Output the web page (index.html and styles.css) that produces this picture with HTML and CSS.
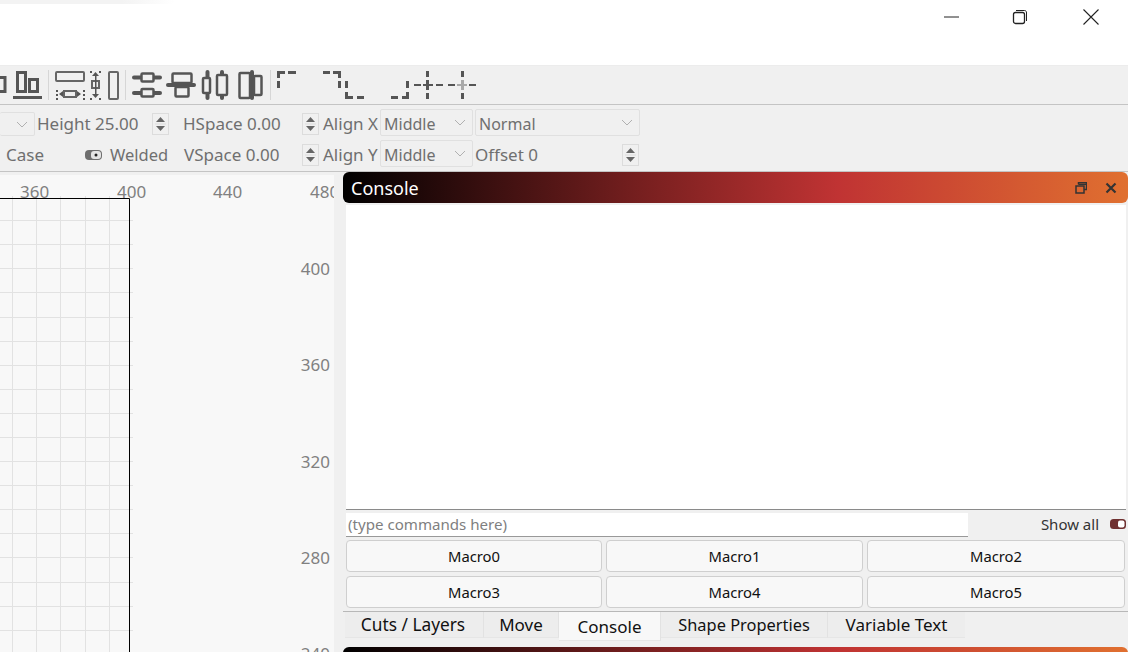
FILE: index.html
```html
<!DOCTYPE html>
<html lang="en">
<head>
<meta charset="utf-8">
<title>LightBurn</title>
<link rel="stylesheet" href="styles.css">
</head>
<body>
<svg class="defs" width="0" height="0" aria-hidden="true">
  <symbol id="spin" viewBox="0 0 17 22">
    <rect x="0.5" y="0.5" width="16" height="21" fill="none" stroke="#dcdcdc"/>
    <path d="M8.500 4L13 9H4Z" fill="#666"/>
    <path d="M8.500 18L13 13H4Z" fill="#666"/>
    <path d="M3 11H14" stroke="#dcdcdc"/>
  </symbol>
  <symbol id="chev" viewBox="0 0 12 7">
    <path d="M1 1L6 6L11 1" fill="none" stroke="#b0b0b0"/>
  </symbol>
</svg>
<div class="app">
  <header class="titlebar">
    <div class="shadow"></div>
    <svg class="winicon win-min" width="16" height="16" viewBox="0 0 16 16"><path d="M0 8H15" stroke="#222" fill="none"/></svg>
    <svg class="winicon win-max" width="16" height="16" viewBox="0 0 16 16"><rect x="1.500" y="3.500" width="11" height="11" rx="2" fill="none" stroke="#222" stroke-width="1.300"/><path d="M4 1.500H12.500C14 1.500 14.500 2.500 14.500 4V12" fill="none" stroke="#222"/></svg>
    <svg class="winicon win-close" width="16" height="16" viewBox="0 0 16 16"><path d="M0.500 0.500L15.500 15.500M15.500 0.500L0.500 15.500" stroke="#222" fill="none" stroke-width="1.100"/></svg>
  </header>

  <div class="toolbar">
    <svg class="tool t1" width="48" height="39" viewBox="0 0 48 39">
      <g fill="none" stroke="#555" stroke-width="3">
        <rect x="-4" y="11.500" width="9" height="14"/>
        <rect x="17.500" y="6.500" width="8" height="19"/>
        <rect x="29.500" y="13.500" width="8" height="12"/>
      </g>
      <rect x="13" y="30" width="29" height="3" fill="#555"/>
    </svg>
    <i class="sep"></i>
    <svg class="tool t2" width="76" height="39" viewBox="49 0 76 39">
      <g fill="none" stroke="#666" stroke-width="2">
        <rect x="56" y="6" width="28" height="9" rx="1"/>
        <rect x="64" y="25" width="12" height="6"/>
        <rect x="92" y="15" width="7" height="7"/>
        <rect x="109" y="6" width="9" height="27" rx="1"/>
      </g>
      <g fill="#555">
        <path d="M59 28L63 25V31ZM81 28L77 25V31ZM95.500 6L99 10H92ZM95.500 32L99 28H92Z"/>
        <rect x="95" y="9" width="1.500" height="20"/>
        <rect x="56" y="24" width="2" height="2"/><rect x="56" y="28" width="2" height="2"/><rect x="56" y="32" width="2" height="2"/>
        <rect x="83" y="24" width="2" height="2"/><rect x="83" y="28" width="2" height="2"/><rect x="83" y="32" width="2" height="2"/>
        <rect x="90" y="5" width="2" height="2"/><rect x="99" y="5" width="2" height="2"/>
        <rect x="90" y="32" width="2" height="2"/><rect x="99" y="32" width="2" height="2"/>
      </g>
    </svg>
    <i class="sep"></i>
    <svg class="tool t3" width="144" height="39" viewBox="126 0 144 39">
      <g fill="#555">
        <rect x="132" y="9.500" width="30" height="4" rx="2"/>
        <rect x="132" y="25" width="30" height="4" rx="2"/>
        <rect x="166" y="17" width="30" height="4" rx="2"/>
        <rect x="205.500" y="4" width="4" height="30" rx="2"/>
        <rect x="220" y="4" width="4" height="30" rx="2"/>
        <rect x="250" y="4" width="4" height="30" rx="2"/>
      </g>
      <g fill="#f0f0f0" stroke="#555" stroke-width="2.500">
        <rect x="141.500" y="7.500" width="12" height="8" rx="1"/>
        <rect x="141.500" y="23" width="12" height="7.500" rx="1"/>
        <rect x="172.500" y="7.500" width="19" height="9.500" rx="1"/>
        <rect x="175.500" y="21" width="13" height="9.500" rx="1"/>
        <rect x="203" y="12" width="7" height="15" rx="1"/>
        <rect x="217" y="9" width="10" height="20" rx="1"/>
        <rect x="239.500" y="7" width="10.500" height="25" rx="1"/>
        <rect x="254" y="10" width="7.500" height="19" rx="1"/>
      </g>
    </svg>
    <i class="sep"></i>
    <svg class="tool t4" width="210" height="39" viewBox="271 0 210 39">
      <g fill="#555">
        <path d="M277 5H285V8H280V12H277ZM288 5H296V8H288ZM277 15H280V22H277Z"/>
        <path d="M323 5H330V8H323ZM333 5H341V12H338V8H333ZM338 15H341V22H338Z"/>
        <path d="M345 15H348V22H345ZM345 26H348V30H353V33H345ZM357 30H364V33H357Z"/>
        <path d="M406 15H409V22H406ZM406 26H409V33H402V30H406ZM391 30H398V33H391Z"/>
        <path d="M426 5H429V11H426ZM426 27H429V33H426ZM414 18H421V20H414ZM436 18H443V20H436ZM426 14H429V18H433V20H429V24H426V20H423V18H426Z"/>
        <path d="M461 5H464V11H461ZM461 27H464V33H461ZM448 18H455V20H448ZM469 18H476V20H469Z"/>
      </g>
      <path d="M461 14H464V18H467V20H464V24H461V20H457V18H461Z" fill="#a8a8a8"/>
    </svg>
  </div>

  <div class="props">
    <div class="combo combo-clipped"><svg class="chev" width="12" height="7"><use href="#chev"/></svg></div>
    <span class="lbl">Height 25.00</span>
    <svg class="spin" width="17" height="22"><use href="#spin"/></svg>
    <span class="lbl">HSpace 0.00</span>
    <svg class="spin" width="17" height="22"><use href="#spin"/></svg>
    <span class="lbl">Align X</span>
    <div class="combo"><span>Middle</span><svg class="chev" width="12" height="7"><use href="#chev"/></svg></div>
    <div class="combo combo-wide"><span>Normal</span><svg class="chev" width="12" height="7"><use href="#chev"/></svg></div>

    <span class="lbl lbl-case">Case</span>
    <div class="welded">
      <svg class="toggle" width="17" height="10" viewBox="0 0 17 10"><rect width="17" height="10" rx="4" fill="#6e6e6e"/><rect x="6" y="1" width="10" height="8" rx="3" fill="#e4e4e4"/><circle cx="11" cy="5" r="1.500" fill="#222"/></svg>
      <span class="lbl lbl-welded">Welded</span>
    </div>
    <span class="lbl lbl-v">VSpace 0.00</span>
    <svg class="spin" width="17" height="22"><use href="#spin"/></svg>
    <span class="lbl">Align Y</span>
    <div class="combo"><span>Middle</span><svg class="chev" width="12" height="7"><use href="#chev"/></svg></div>
    <div class="offset"><span class="lbl">Offset 0</span><svg class="spin" width="17" height="22"><use href="#spin"/></svg></div>
  </div>

  <main class="main">
    <section class="canvas">
      <svg class="grid" width="334" height="477" viewBox="0 175 334 477">
        <g stroke="#e2e2e2" fill="none">
          <path d="M12.500 196V652M36.500 196V652M60.500 196V652M85.500 196V652M109.500 196V652"/>
          <path d="M0 220.500H133M0 244.500H133M0 268.500H133M0 292.500H133M0 317.500H133M0 341.500H133M0 365.500H133M0 389.500H133M0 413.500H133M0 437.500H133M0 461.500H133M0 485.500H133M0 509.500H133M0 533.500H133M0 557.500H133M0 582.500H133M0 606.500H133M0 630.500H133"/>
        </g>
        <path d="M0 198.500H129.500V652" fill="none" stroke="#000"/>
      </svg>
      <span class="rx r360">360</span>
      <span class="rx r400">400</span>
      <span class="rx r440">440</span>
      <span class="rx r480">480</span>
      <span class="ry y400">400</span>
      <span class="ry y360">360</span>
      <span class="ry y320">320</span>
      <span class="ry y280">280</span>
      <span class="ry y240">240</span>
    </section>

    <aside class="dock">
      <div class="panelhead">
        <span class="paneltitle">Console</span>
        <svg width="12" height="12" viewBox="0 0 12 12"><path d="M3.500 2.500V0.500H11.500V7.500H9" fill="none" stroke="#333" stroke-width="1.500"/><path d="M3.500 1.500H11V3H3.500Z" fill="#333"/><rect x="1" y="4" width="8" height="7" fill="none" stroke="#333" stroke-width="1.500"/></svg>
        <svg class="panelclose" width="12" height="12" viewBox="0 0 12 12"><path d="M1.500 1.500L10.500 10.500M10.500 1.500L1.500 10.500" stroke="#333" stroke-width="2.200" fill="none"/></svg>
      </div>
      <div class="output"></div>
      <div class="cmdrow">
        <div class="cmd">(type commands here)</div>
        <span class="showall">Show all</span>
        <svg class="toggle2" width="16" height="10" viewBox="0 0 16 10"><rect width="16" height="10" rx="3.500" fill="#6f3030"/><rect x="8" y="1.500" width="6.500" height="7" rx="2" fill="#fff"/></svg>
      </div>
      <div class="macros">
        <button class="macro">Macro0</button>
        <button class="macro">Macro1</button>
        <button class="macro">Macro2</button>
        <button class="macro">Macro3</button>
        <button class="macro">Macro4</button>
        <button class="macro">Macro5</button>
      </div>
      <nav class="tabs">
        <span class="tab tab-cuts">Cuts / Layers</span>
        <span class="tab tab-move">Move</span>
        <span class="tab tab-active">Console</span>
        <span class="tab tab-shape">Shape Properties</span>
        <span class="tab tab-var">Variable Text</span>
      </nav>
      <div class="nexthead"></div>
    </aside>
  </main>
</div>
</body>
</html>
```
FILE: styles.css
```css
* { box-sizing: border-box; }
html, body { margin: 0; padding: 0; }
body { background: #f0f0f0; font-family: "Noto Sans", "Open Sans", sans-serif; font-size: 16px; overflow: hidden; }
.defs { position: absolute; }
.app { width: 1128px; height: 652px; display: flex; flex-direction: column; overflow: hidden; }

.titlebar { height: 66px; flex: none; background: #fff; display: flex; align-items: flex-start; position: relative; border-bottom: 1px solid #ececec; }
.shadow { position: absolute; left: 0; top: 0; width: 175px; height: 4px; background: linear-gradient(90deg, #f3f3f3 70%, #fff); }
.winicon { flex: none; margin-top: 9px; }
.win-min { margin-left: 944px; }
.win-max { margin-left: 52px; }
.win-close { margin-left: 55px; }

.toolbar { height: 39px; flex: none; display: flex; align-items: flex-start; background: #f0f0f0; border-bottom: 1px solid #c4c4c4; }
.tool { flex: none; display: block; }
.t1 { width: 48px; }
.sep { flex: none; width: 1px; height: 30px; margin-top: 4px; background: #d6d6d6; }

.props { height: 67px; flex: none; display: grid; grid-template-columns: 37px 115px 31px 119px 21px 57px 95px 165px; grid-template-rows: 28px 28px; row-gap: 3px; align-items: center; padding-top: 3px; border-bottom: 1px solid #c4c4c4; background: #f0f0f0; }
.lbl { color: #6f6f6f; white-space: nowrap; line-height: 22px; font-size: 17px; margin-top: 4px; }
.lbl-case { padding-left: 6px; }
.lbl-v { padding-left: 1px; }
.lbl-welded { font-size: 16.500px; }
.combo { width: 93px; height: 27px; border: 1px solid #e0e0e0; border-radius: 2px; display: flex; align-items: center; justify-content: space-between; padding: 0 6px 0 3px; color: #6f6f6f; }
.combo span { padding-top: 4px; }
.combo-clipped { width: 35px; border-left: 0; justify-content: flex-end; height: 24px; margin-top: 4px; }
.combo-wide { width: 165px; }
.chev { flex: none; display: block; }
.spin { display: block; margin-top: 4px; }
.welded { grid-column: span 2; display: flex; align-items: center; gap: 8px; padding-left: 48px; }
.toggle { flex: none; margin-top: 4px; }
.offset { display: flex; align-items: center; justify-content: space-between; width: 164px; }

.main { flex: 1; min-height: 0; display: flex; }
.canvas { width: 334px; flex: none; margin-top: 3px; background: #f8f8f8; position: relative; overflow: hidden; color: #808080; font-size: 17px; }
.grid { position: absolute; left: 0; top: 0; display: block; }
.rx, .ry { position: absolute; line-height: 22px; }
.rx { top: 6px; }
.r360 { left: 20px; }
.r400 { left: 117px; }
.r440 { left: 213px; }
.r480 { left: 310px; }
.ry { right: 4px; }
.y400 { top: 83px; }
.y360 { top: 179px; }
.y320 { top: 276px; }
.y280 { top: 372px; }
.y240 { top: 468px; }

.dock { margin-left: 9px; width: 785px; flex: none; display: flex; flex-direction: column; }
.panelhead { height: 31px; flex: none; border-radius: 6px; background: linear-gradient(90deg, #000 0, #7a2020 39%, #c03333 63%, #e07030 100%); display: flex; align-items: center; gap: 18px; padding: 0 11px 0 8px; }
.paneltitle { flex: 1; color: #fff; font-size: 18px; }
.output { height: 305px; flex: none; margin: 2px 2px 0 3px; background: #fff; border-bottom: 1px solid #8a8a8a; }
.cmdrow { height: 24px; flex: none; margin: 3px 2px 0 3px; display: flex; align-items: center; }
.cmd { width: 622px; height: 24px; background: #fff; border-bottom: 1px solid #999; color: #808080; padding-left: 2px; line-height: 22px; font-size: 15.100px; }
.showall { margin-left: 73px; color: #333; font-size: 15px; margin-top: -2px; }
.toggle2 { margin-left: 11px; flex: none; margin-top: -2px; }
.macros { flex: none; margin: 3px 3px 0 3px; display: grid; grid-template-columns: 256px 257px 258px; column-gap: 4px; row-gap: 4px; grid-auto-rows: 32px; }
.macro { background: #f8f8f8; border: 1px solid #cfcfcf; border-radius: 4px; font: 14.800px "Noto Sans", sans-serif; color: #111; padding: 0; }
.tabs { flex: none; height: 36px; margin-top: 3px; border-top: 1px solid #b8b8b8; display: flex; align-items: flex-start; padding-left: 2px; }
.tab { height: 26px; background: #ededed; color: #111; font-size: 17px; line-height: 25px; text-align: center; border-right: 1px solid #e2e2e2; border-bottom: 1px solid #e6e6e6; }
.tab-cuts { width: 139px; font-size: 17.300px; padding-right: 2px; }
.tab-move { width: 75px; }
.tab-active { width: 102px; height: 29px; background: #f8f8f8; line-height: 29px; }
.tab-shape { width: 167px; font-size: 16.400px; }
.tab-var { width: 137px; border-right: 0; }
.nexthead { flex: none; height: 8px; border-radius: 6px 6px 0 0; background: linear-gradient(90deg, #000 0, #7a2020 39%, #c03333 63%, #e07030 100%); }
```
